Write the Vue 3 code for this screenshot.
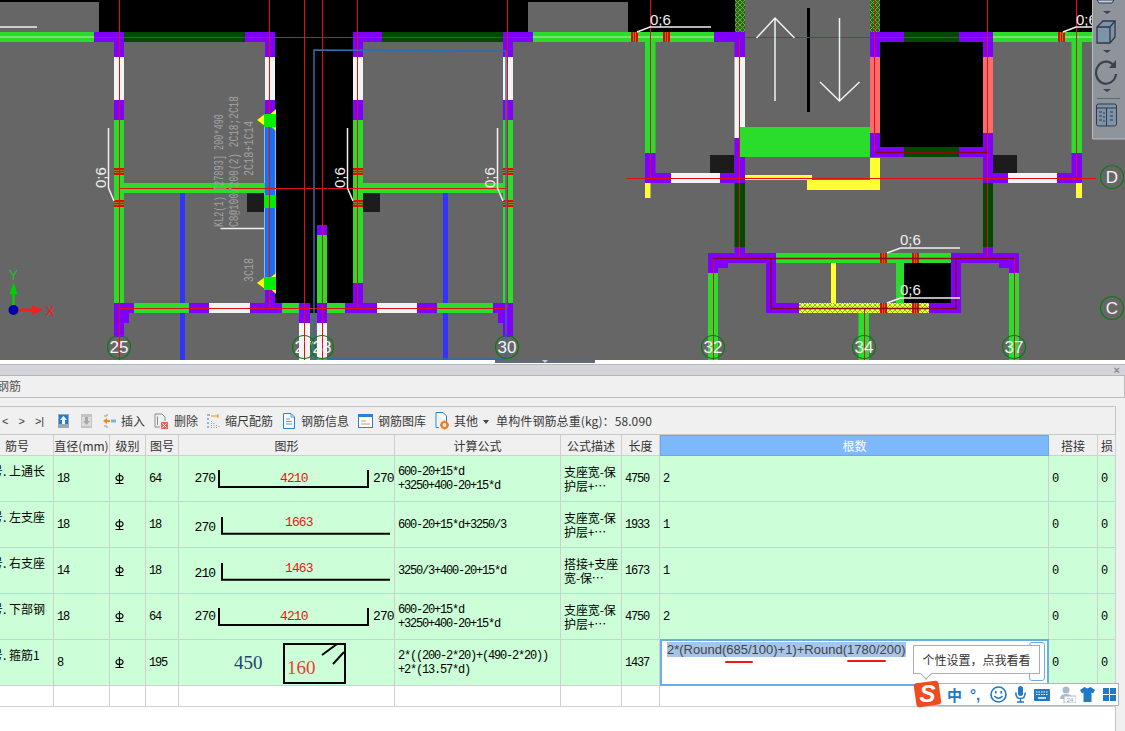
<template>
  <div class="page">
    <!-- CAD view, everything here sits on a free canvas -->
    <svg class="cad" width="1125" height="360" viewBox="0 0 1125 360">
      <defs>
        <pattern id="hatchGreen" width="5" height="5" patternUnits="userSpaceOnUse">
          <rect width="5" height="5" fill="#3c5a1e" />
          <path d="M0 0L5 5M5 0L0 5" stroke="#3fc52f" stroke-width="1" />
        </pattern>
        <pattern id="hatchYellow" width="5" height="5" patternUnits="userSpaceOnUse">
          <rect width="5" height="5" fill="#ffff33" />
          <path d="M0 0L5 5M5 0L0 5" stroke="#3fc52f" stroke-width="0.8" />
        </pattern>
      </defs>
      <rect width="1125" height="360" fill="#666666" />
      <rect v-for="(r, i) in walls" :key="'w' + i" :x="r[0]" :y="r[1]" :width="r[2]" :height="r[3]" :fill="r[4]" />
      <path v-for="(l, i) in redLines" :key="'l' + i" :d="l" class="red-line" />
      <path v-for="(l, i) in darkLines" :key="'d' + i" :d="l" class="dark-line" />

      <!-- selected column outline -->
      <path d="M506 51L314 50V359H506V51" class="selection" />

      <!-- lift arrows -->
      <path d="M775 18V101M756.5 38L775 18L794.5 38M839.5 18V101M820 82L839.5 101L859.5 82" class="white-thin" />

      <!-- beam text -->
      <text transform="rotate(-90 223 227)" x="223" y="227" class="beam-text" textLength="113" lengthAdjust="spacingAndGlyphs">KL2(1) [27893] 200*490</text>
      <text transform="rotate(-90 238 227)" x="238" y="227" class="beam-text" textLength="131" lengthAdjust="spacingAndGlyphs">C8@100/200(2) 2C18;2C18</text>
      <text transform="rotate(-90 253 176)" x="253" y="176" class="beam-text" textLength="55" lengthAdjust="spacingAndGlyphs">2C18+1C14</text>
      <text transform="rotate(-90 253 282)" x="253" y="282" class="beam-text" textLength="24" lengthAdjust="spacingAndGlyphs">3C18</text>
      <path d="M220.5 228.5H264" class="white-line" />
      <path d="M0 27H37" class="white-line" />

      <!-- triangles on the selected beam -->
      <path d="M276 109V131L264 120Z" class="tri" />
      <path d="M257 120L265 114V126Z" class="tri" />
      <path d="M276 273V294L264 283Z" class="tri" />
      <path d="M257 283L265 277V289Z" class="tri" />
      <rect x="264" y="114" width="12" height="13" fill="#00ee00" />
      <rect x="264" y="277" width="12" height="13" fill="#00ee00" />

      <!-- 0;6 labels -->
      <path v-for="(l, i) in leaders" :key="'p' + i" :d="l" class="white-line" />
      <text v-for="(t, i) in sideLabels" :key="'s' + i" :x="t" y="188" :transform="`rotate(-90 ${t} 188)`" class="small-label">0;6</text>
      <text v-for="(t, i) in topLabels" :key="'t' + i" :x="t[0]" :y="t[1]" class="small-label">0;6</text>

      <!-- axis bubbles -->
      <g v-for="a in axes" :key="a.t">
        <circle :cx="a.x" :cy="a.y" r="11.5" class="axis" />
        <text :x="a.x" :y="a.y + 6" class="axis-text">{{ a.t }}</text>
      </g>

      <!-- axis gizmo -->
      <path d="M13.5 310V292" stroke="#00d000" stroke-width="2.5" />
      <path d="M9.5 294L13.5 282L17.5 294Z" fill="#00d000" />
      <path d="M14 310H33" stroke="#f02020" stroke-width="3" />
      <path d="M32 305L43 310L32 315Z" fill="#f02020" />
      <circle cx="13.5" cy="310" r="5" fill="#0000a8" />
      <text x="13.5" y="280" class="gizmo gizmo-y">Y</text>
      <text x="50" y="316" class="gizmo gizmo-x">X</text>

      <!-- view toolbar on the right -->
      <rect x="1092" y="0" width="33" height="139" fill="#8e949a" />
      <path d="M1092.5 0V139H1125" fill="none" stroke="#b9bdc1" />
      <path d="M1097 0H1114L1112 3H1099Z" fill="#c3d2e3" stroke="#2e3a4a" />
      <g class="side-caret">
        <path d="M1103 11H1111L1107 14Z" />
        <path d="M1103 50H1111L1107 53Z" />
        <path d="M1103 89H1111L1107 92Z" />
      </g>
      <path d="M1097 27L1103 21H1115V37L1110 43H1097Z" fill="#7f93a8" stroke="#2e3a4a" stroke-width="1.3" />
      <path d="M1097 27H1110V43M1110 27L1115 21" fill="none" stroke="#2e3a4a" stroke-width="1.3" />
      <path d="M1114 66A10 11 0 1 0 1116 74" fill="none" stroke="#38434f" stroke-width="2.2" />
      <path d="M1116 60V68H1109Z" fill="#38434f" />
      <path d="M1097 98.500H1120" stroke="#5e666e" />
      <rect x="1096.500" y="104" width="20" height="22" rx="2" fill="#7f93a8" stroke="#2e3a4a" />
      <path d="M1097 108H1116M1106.500 108V126M1099 112H1102M1099 116H1102M1099 120H1102M1110 112H1113M1110 116H1113M1110 120H1113M1103 113H1105M1103 117H1105M1103 121H1105" stroke="#2e3a4a" fill="none" />
    </svg>

    <div class="strip"><div class="thumb"><i></i></div></div>
    <div class="band"><span class="close">×</span></div>
    <div class="title"><span>钢筋</span></div>
    <div class="spacer"></div>

    <div class="lower">
      <div class="panel">
        <div class="toolbar">
          <div class="nav"><span>&lt;</span><span>&gt;</span><span>&gt;|</span></div>
          <div class="updown">
            <svg width="11" height="14" viewBox="0 0 11 14">
              <rect width="11" height="14" fill="#9aa7b4" />
              <rect x="1" y="1" width="9" height="9" fill="#1b7ed2" />
              <path d="M5.500 2L9 6H7V10H4V6H2Z" fill="#fff" />
            </svg>
            <svg width="11" height="14" viewBox="0 0 11 14">
              <rect width="11" height="14" fill="#c4c4c4" />
              <rect x="1" y="3" width="9" height="9" fill="#dcdcdc" />
              <path d="M5.500 11L9 7H7V3H4V7H2Z" fill="#a8a8a8" />
            </svg>
          </div>
          <div class="tool">
            <svg width="13" height="16" viewBox="0 0 13 16">
              <path d="M1 3H4M1 13H4M4 1V3M4 13V15" stroke="#9a9a9a" fill="none" />
              <path d="M0 8L4 5V7H7V9H4V11Z" fill="#ef8a1d" />
              <rect x="8" y="6.500" width="5" height="3" fill="#7db2e0" />
            </svg>
            插入
          </div>
          <div class="tool">
            <svg width="15" height="16" viewBox="0 0 15 16">
              <path d="M1 1H8L11 4V8M6 14H1V1M3.500 3.500V12" stroke="#8c8c8c" fill="none" />
              <rect x="7" y="9" width="7" height="7" fill="#e8635c" />
              <path d="M8.500 10.500L12.500 14.500M12.500 10.500L8.500 14.500" stroke="#fff" />
            </svg>
            删除
          </div>
          <div class="tool">
            <svg width="13" height="16" viewBox="0 0 13 16">
              <path d="M0 2H3M0 6H2M0 10H2M0 14H2" stroke="#1b7ed2" />
              <path d="M4 3H11" stroke="#ef8a1d" />
              <path d="M11 1V5" stroke="#ef8a1d" />
              <path d="M4.500 8V15M7 10V15M9.500 12V15M12 13V15" stroke="#9a9a9a" stroke-dasharray="1 1" />
            </svg>
            缩尺配筋
          </div>
          <div class="tool">
            <svg width="14" height="16" viewBox="0 0 14 16">
              <path d="M1.500 .5H9L12.500 4V15.500H1.500Z" fill="#fff" stroke="#2a82d8" />
              <path d="M4 6H8M4 8.500H10M4 11H10M9 1V4H12" stroke="#5a9ad8" fill="none" />
            </svg>
            钢筋信息
          </div>
          <div class="tool">
            <svg width="15" height="16" viewBox="0 0 15 16">
              <rect x=".5" y="1.500" width="14" height="13" fill="#fff" stroke="#2a82d8" />
              <rect x="0" y="1" width="15" height="3" fill="#2a82d8" />
              <path d="M3 8H8M3 11H12" stroke="#c79a62" />
            </svg>
            钢筋图库
          </div>
          <div class="tool">
            <svg width="14" height="18" viewBox="0 0 14 18">
              <path d="M1 .5H8L11.500 4V10M4 15.500H1V.5" fill="#fff" stroke="#2a82d8" />
              <circle cx="9.500" cy="13" r="3" fill="none" stroke="#ef7d1d" stroke-width="2.200" />
              <path d="M9.500 8.500V10M9.500 16V17.500M5 13H6.500M12.500 13H14" stroke="#ef7d1d" stroke-width="1.600" />
            </svg>
            其他
          </div>
          <span class="caret"></span>
          <span class="total">单构件钢筋总重(kg)：58.090</span>
        </div>

        <table class="grid">
          <colgroup>
            <col v-for="w in colWidths" :key="w.k" :width="w.w" />
          </colgroup>
          <thead>
            <tr>
              <th class="first-head">筋号</th>
              <th>直径(mm)</th>
              <th>级别</th>
              <th>图号</th>
              <th>图形</th>
              <th>计算公式</th>
              <th>公式描述</th>
              <th>长度</th>
              <th class="active">根数</th>
              <th>搭接</th>
              <th class="cut">损</th>
            </tr>
          </thead>
          <tbody>
            <tr v-for="(r, i) in rows" :key="i">
              <td class="name"><span>{{ r.name }}</span></td>
              <td class="num">{{ r.dia }}</td>
              <td class="grade">
                <svg width="9" height="11" viewBox="0 0 9 11">
                  <ellipse cx="4.500" cy="5" rx="3.500" ry="2.500" fill="none" stroke="#000" stroke-width="1.200" />
                  <path d="M4.500 0V10M.5 10.500H8.500" stroke="#000" stroke-width="1.200" fill="none" />
                </svg>
              </td>
              <td class="num">{{ r.no }}</td>
              <td class="shape-cell">
                <svg class="shape" width="215" height="45" viewBox="0 0 215 45">
                  <path :d="r.shape" class="bar" />
                  <text v-for="t in r.labels" :key="t.s + t.x" :x="t.x" :y="t.y" :class="t.c">{{ t.s }}</text>
                </svg>
              </td>
              <td class="num formula"><div v-for="f in r.formula" :key="f">{{ f }}</div></td>
              <td class="desc">{{ r.desc }}</td>
              <td class="num">{{ r.len }}</td>
              <td v-if="!r.editing" class="num">{{ r.count }}</td>
              <td v-else class="edit-cell">
                <div class="editor">
                  <span class="selected">2*(Round(685/100)+1)+Round(1780/200)</span>
                  <i class="mark mark-a"></i>
                  <i class="mark mark-b"></i>
                  <i class="editor-btn"></i>
                </div>
              </td>
              <td class="num">0</td>
              <td class="num">0</td>
            </tr>
            <tr class="empty">
              <td v-for="w in colWidths" :key="w.k"></td>
            </tr>
          </tbody>
        </table>
      </div>
      <div class="side"></div>
    </div>

    <!-- input method hint and bar over the table -->
    <div class="hint">个性设置，点我看看<i></i></div>
    <div class="ime">
      <svg class="ime-logo" width="29" height="28" viewBox="0 0 29 28">
        <rect x="2" y="2" width="25" height="24" rx="3" fill="#ee4e1f" transform="rotate(-8 14 14)" />
        <text x="14.500" y="22" class="logo-s">S</text>
      </svg>
      <span class="ime-cn">中</span>
      <span class="ime-punct">°,</span>
      <svg width="17" height="17" viewBox="0 0 17 17">
        <circle cx="8.500" cy="8.500" r="7.500" fill="none" stroke="#1f78c8" stroke-width="1.600" />
        <path d="M5.800 5V7.500M11.200 5V7.500" stroke="#1f78c8" stroke-width="1.600" />
        <path d="M4.500 10Q8.500 14.500 12.500 10" fill="none" stroke="#1f78c8" stroke-width="1.500" />
      </svg>
      <svg width="11" height="17" viewBox="0 0 11 17">
        <rect x="3" y="0" width="5" height="10" rx="2.500" fill="#1f78c8" />
        <path d="M.8 6.500Q.8 12.500 5.500 12.500Q10.200 12.500 10.200 6.500M5.500 12.500V15.500M2 16H9" fill="none" stroke="#1f78c8" stroke-width="1.500" />
      </svg>
      <svg width="16" height="12" viewBox="0 0 16 12">
        <rect width="16" height="12" rx="1" fill="#1f78c8" />
        <path d="M2 3H14M2 5.500H14" stroke="#fff" stroke-dasharray="1.500 1" />
        <path d="M4 9H12" stroke="#fff" stroke-width="1.500" />
      </svg>
      <svg class="ime-person" width="18" height="17" viewBox="0 0 18 17">
        <circle cx="8" cy="4" r="3.500" fill="#a9bccb" />
        <path d="M2 13Q2 8 8 8Q14 8 14 13Z" fill="#a9bccb" />
        <rect x="6" y="10" width="12" height="7" fill="#fff" stroke="#a9bccb" />
        <text x="12" y="16" class="ime-small">24</text>
      </svg>
      <svg width="15" height="15" viewBox="0 0 15 15">
        <path d="M4.500 0L7.500 1.500L10.500 0L15 3L13 6.500L11.500 5.500V15H3.500V5.500L2 6.500L0 3Z" fill="#1f78c8" />
      </svg>
      <svg width="13" height="13" viewBox="0 0 13 13">
        <rect width="6" height="6" fill="#1f78c8" />
        <rect x="7" width="6" height="6" fill="#1f78c8" />
        <rect y="7" width="6" height="6" fill="#1f78c8" />
        <rect x="7" y="7" width="6" height="6" fill="#1f78c8" />
      </svg>
    </div>
  </div>
</template>

<script setup>
const G = "#2bdd2b";
const P = "#8000ff";
const D = "#004b00";
const W = "#f4f4f4";
const K = "#000000";
const Y = "#ffff33";
const B = "#3333ff";
const S = "#1c1c1c";
const N = "#ff6a6a";
const R = "#f00000";
const T = "#6aa820";

const tieV = (x, y) => [
  [x, y, 10, 7, R],
  [x, y + 2, 10, 0.8, T],
  [x, y + 4.2, 10, 0.8, T],
];
const tieH = (x, y) => [
  [x, y, 7, 10, R],
  [x + 2, y, 0.8, 10, T],
  [x + 4.2, y, 0.8, 10, T],
];

const walls = [
  // black voids at the top
  [0, 0, 100, 2, K],
  [99, 0, 429, 32, K],
  [528, 0, 100, 2, K],
  [628, 0, 107, 32, K],
  [880, 0, 245, 32, K],
  [275, 32, 78, 271, K],
  [310, 303, 7, 10, K],
  [735, 0, 10, 32, "url(#hatchGreen)"],
  [870, 0, 10, 32, "url(#hatchGreen)"],
  [880, 42, 103, 105, K],
  [904, 263, 47, 40, K],
  // top wall
  [0, 32, 94, 10, G],
  [0, 36.5, 94, 1, "#cfe8b0"],
  [94, 32, 30, 10, P],
  [124, 32, 121, 10, D],
  [245, 32, 30, 10, P],
  [353, 32, 29, 10, P],
  [382, 32, 121, 10, D],
  [503, 32, 30, 10, P],
  [533, 32, 181, 10, G],
  [533, 36.5, 181, 1, "#cfe8b0"],
  [714, 32, 31, 10, P],
  [870, 32, 34, 10, P],
  [904, 32, 55, 10, D],
  [959, 32, 34, 10, P],
  [993, 32, 99, 10, G],
  [993, 36.5, 99, 1, "#cfe8b0"],
  ...tieH(631, 32),
  ...tieH(663, 32),
  ...tieH(1058, 32),
  // column 25
  [114, 42, 10, 15, P],
  [114, 57, 10, 43, W],
  [114, 100, 10, 20, P],
  [114, 120, 10, 183, G],
  ...tieV(114, 168),
  ...tieV(114, 200),
  // column 27
  [265, 42, 10, 15, P],
  [265, 57, 10, 43, W],
  [265, 100, 10, 14, P],
  [264, 126, 12, 152, "#8ab8e8"],
  [265, 126, 10, 152, "#1a70f0"],
  [265, 290, 10, 13, P],
  [264, 195, 12, 13, "#00ee00"],
  // column 28 and 30
  [353, 42, 10, 15, P],
  [353, 57, 10, 43, W],
  [353, 100, 10, 20, P],
  [353, 120, 10, 163, G],
  [353, 283, 10, 20, P],
  ...tieV(353, 168),
  ...tieV(353, 200),
  [503, 42, 10, 15, P],
  [503, 57, 10, 43, W],
  [503, 100, 10, 20, P],
  [503, 120, 10, 183, G],
  ...tieV(503, 168),
  ...tieV(503, 200),
  // short wall at 28
  [317, 225, 10, 10, P],
  [317, 235, 10, 68, G],
  // middle walls
  [124, 183, 141, 10, G],
  [363, 183, 140, 10, G],
  [247, 193, 17, 19, S],
  [363, 193, 17, 19, S],
  [180, 193, 5, 110, B],
  [180, 313, 5, 47, B],
  [443, 193, 5, 110, B],
  [443, 313, 5, 47, B],
  // bottom wall
  [114, 303, 20, 10, P],
  [134, 303, 55, 10, G],
  [189, 303, 20, 10, P],
  [209, 303, 41, 10, W],
  [250, 303, 32, 10, P],
  [282, 303, 17, 10, G],
  [299, 303, 11, 10, P],
  [317, 303, 10, 10, P],
  [327, 303, 18, 10, G],
  [345, 303, 32, 10, P],
  [377, 303, 40, 10, W],
  [417, 303, 20, 10, P],
  [437, 303, 56, 10, G],
  [493, 303, 20, 10, P],
  [114, 313, 15, 10, P],
  [114, 323, 10, 14, P],
  [498, 313, 15, 10, P],
  [503, 323, 10, 14, P],
  [299, 313, 11, 10, P],
  [299, 323, 11, 37, W],
  [317, 313, 10, 10, P],
  [317, 323, 10, 37, W],
  // stairs group
  [645, 42, 10.5, 111, G],
  [645, 153, 10.5, 30, P],
  [645, 173, 26, 10, P],
  [671, 173, 49, 10, W],
  [720, 173, 25, 10, P],
  [645, 183, 5.5, 15, Y],
  [710, 155, 24.5, 18, S],
  [734.500, 42, 10.5, 15, P],
  [734.500, 57, 10.5, 81, W],
  [734.500, 138, 10.5, 45, P],
  [734.500, 183, 10.5, 64, D],
  [734.500, 247, 10.5, 6, P],
  [740, 127, 130, 30, G],
  [807, 8, 3, 104, K],
  [870, 42, 10, 15, P],
  [870, 57, 10, 76, N],
  [870, 133, 10, 24, P],
  [983, 42, 10, 15, P],
  [983, 57, 10, 76, N],
  [983, 133, 10, 50, P],
  [880, 147, 24, 10, P],
  [904, 147, 55, 10, D],
  [959, 147, 24, 10, P],
  [983, 173, 25, 10, P],
  [1008, 173, 49, 10, W],
  [1057, 173, 25, 10, P],
  [1071.500, 42, 10.5, 111, G],
  [1071.500, 153, 10.5, 30, P],
  [1076, 183, 6, 15, Y],
  [993, 155, 24, 18, S],
  [983, 183, 10, 64, D],
  [983, 247, 10, 6, P],
  [745, 175, 67, 5, Y],
  [807, 180, 73, 10, Y],
  [870, 158, 10, 32, Y],
  // lower box
  [708, 253, 68, 10, P],
  [776, 253, 175, 10, G],
  [951, 253, 68, 10, P],
  ...tieH(880, 253),
  ...tieH(912, 253),
  [708, 263, 10, 10, P],
  [708, 263, 20, 5, P],
  [708, 273, 10, 87, G],
  [1009, 263, 10, 10, P],
  [999, 263, 20, 5, P],
  [1009, 273, 10, 87, G],
  [766, 263, 10, 50, P],
  [951, 263, 10, 50, P],
  [766, 303, 33, 10, P],
  [799, 303, 130, 10, "url(#hatchYellow)"],
  [929, 303, 32, 10, P],
  [896, 263, 8, 40, G],
  [831, 263, 5, 40, Y],
  ...tieH(880, 303),
  ...tieH(912, 303),
  [858.500, 313, 10.5, 47, G],
];

const redLines = [
  "M94 37.500H533",
  "M745 37.500H993",
  "M119.500 0V360",
  "M269.500 0V308",
  "M304.500 0V360",
  "M322.500 0V360",
  "M357.500 0V308",
  "M507.500 0V308",
  "M650.500 0V178",
  "M739.500 37V258",
  "M874.500 0V152",
  "M987.500 0V258",
  "M1076.500 0V177",
  "M119 188.500H507",
  "M627 178.500H1096",
  "M119 308.500H507",
  "M713.500 258V360",
  "M1014.500 258V360",
  "M864.500 308V360",
];

const darkLines = [
  "M875 152.500H987.500",
  "M713 258.500H1014.500",
  "M771 258.500V308.500H956V258.500",
];

const leaders = [
  "M108.500 128V188L114 201",
  "M347.500 128V188L353 201",
  "M497.500 128V188L503 201",
  "M637 32L650 27H711",
  "M1063 32L1076 27H1092",
  "M887 253L900.500 248H960",
  "M887 303L900.500 298H960",
];
const sideLabels = [106, 345, 495];
const topLabels = [
  [650, 25],
  [1076, 25],
  [900, 245],
  [900, 295],
];

const axes = [
  { t: "25", x: 119, y: 347 },
  { t: "27", x: 304, y: 347 },
  { t: "28", x: 322, y: 347 },
  { t: "30", x: 507, y: 347 },
  { t: "32", x: 713, y: 347 },
  { t: "34", x: 864, y: 347 },
  { t: "37", x: 1014, y: 347 },
  { t: "D", x: 1112, y: 177 },
  { t: "C", x: 1112, y: 308 },
];

const colWidths = [54, 56, 36, 33, 216, 166, 61, 38, 389, 49, 18].map((w, k) => ({ w, k }));

const longShape = "M40 14V31H189V14";
const leftShape = "M43 15V31.700H211";
const longLabels = (y) => [
  { s: "270", x: 15.500, y, c: "dim" },
  { s: "4210", x: 101, y, c: "dim red" },
  { s: "270", x: 194, y, c: "dim" },
];

const rows = [
  {
    name: "号. 上通长", dia: "18", no: "64", shape: longShape, labels: longLabels(26),
    formula: ["600-20+15*d", "+3250+400-20+15*d"], desc: "支座宽-保护层+…", len: "4750", count: "2",
  },
  {
    name: "号. 左支座", dia: "18", no: "18", shape: leftShape,
    labels: [{ s: "270", x: 15.500, y: 29, c: "dim" }, { s: "1663", x: 106, y: 24, c: "dim red" }],
    formula: ["600-20+15*d+3250/3"], desc: "支座宽-保护层+…", len: "1933", count: "1",
  },
  {
    name: "号. 右支座", dia: "14", no: "18", shape: leftShape,
    labels: [{ s: "210", x: 15.500, y: 29, c: "dim" }, { s: "1463", x: 106, y: 24, c: "dim red" }],
    formula: ["3250/3+400-20+15*d"], desc: "搭接+支座宽-保…", len: "1673", count: "1",
  },
  {
    name: "号. 下部钢", dia: "18", no: "64", shape: longShape, labels: longLabels(26),
    formula: ["600-20+15*d", "+3250+400-20+15*d"], desc: "支座宽-保护层+…", len: "4750", count: "2",
  },
  {
    name: "号. 箍筋1", dia: "8", no: "195",
    shape: "M105 4H166V43H105ZM143 15L158 4M154 24L165 12",
    labels: [{ s: "450", x: 55, y: 29, c: "serif navy" }, { s: "160", x: 108, y: 34, c: "serif soft-red" }],
    formula: ["2*((200-2*20)+(490-2*20))", "+2*(13.57*d)"], desc: "", len: "1437", editing: true,
  },
];
</script>

<style>
body {
  background: #fff;
  overflow: hidden;
}
</style>

<style scoped>
.page {
  position: relative;
  width: 1125px;
  height: 731px;
  overflow: hidden;
  background: #fff;
  font-family: "Noto Sans CJK SC", "Liberation Sans", sans-serif;
  font-size: 12px;
  color: #333;
}

.cad {
  display: block;
}
.red-line {
  stroke: #e01010;
  stroke-width: 1;
  fill: none;
}
.dark-line {
  stroke: #8a0a10;
  stroke-width: 1.5;
  fill: none;
}
.selection {
  fill: none;
  stroke: #2f6ea6;
  stroke-width: 1.5;
}
.white-thin {
  fill: none;
  stroke: #f2f2f2;
  stroke-width: 1.5;
}
.white-line {
  fill: none;
  stroke: #f0f0f0;
  stroke-width: 1.5;
}
.beam-text {
  font-family: "Liberation Mono", monospace;
  font-size: 13px;
  fill: #a3a3a3;
}
.tri {
  fill: #ffff00;
}
.small-label {
  font-family: "Liberation Sans", sans-serif;
  font-size: 15px;
  fill: #f0f0f0;
}
.axis {
  fill: none;
  stroke: #0a7a12;
  stroke-width: 1.2;
}
.axis-text {
  font-family: "Liberation Sans", sans-serif;
  font-size: 17px;
  fill: #f4f4f4;
  text-anchor: middle;
}
.gizmo {
  font-family: "Liberation Sans", sans-serif;
  font-size: 14px;
  text-anchor: middle;
}
.gizmo-y {
  fill: #20c020;
}
.gizmo-x {
  fill: #f02020;
}
.side-caret {
  fill: #3a4450;
}

.strip {
  display: flex;
  height: 4px;
  background: #fff;
  border-bottom: 1px solid #b8b8b8;
}
.thumb {
  display: flex;
  justify-content: center;
  width: 100px;
  height: 3px;
  margin-left: 495px;
  background: #5f6b78;
}
.thumb i {
  width: 0;
  height: 0;
  border: 3px solid transparent;
  border-top-color: #c8ccd0;
}
.band {
  display: flex;
  justify-content: flex-end;
  align-items: center;
  height: 10px;
  padding-right: 5px;
  background: #d3d5da;
  border-bottom: 1px solid #b5b5b5;
}
.close {
  font-family: "Liberation Sans", sans-serif;
  font-size: 11px;
  font-weight: bold;
  line-height: 10px;
  color: #888;
}
.title {
  height: 21px;
  line-height: 20px;
  overflow: hidden;
  background: #f0f0f0;
  border-bottom: 1px solid #bcbcbc;
  border-right: 1px solid #bcbcbc;
  color: #555;
}
.title span {
  margin-left: -3px;
  display: inline-block;
}
.spacer {
  height: 8px;
  background: #f0f0f0;
}
.lower {
  display: flex;
  height: 325px;
}
.panel {
  box-sizing: border-box;
  width: 1116px;
  height: 325px;
  background: #fff;
  border-top: 1px solid #c4c4c4;
  border-right: 1px solid #c4c4c4;
}
.side {
  flex: 1;
  background: #f0f0f0;
}
.toolbar {
  display: flex;
  align-items: center;
  gap: 9px;
  height: 27px;
  background: #f0f0f0;
  border-bottom: 1px solid #c8c8c8;
  color: #3a3a3a;
}
.nav {
  display: flex;
  width: 45px;
  margin-right: 2px;
  padding-left: 2px;
  gap: 10px;
  font-family: "Liberation Sans", sans-serif;
  font-size: 11px;
}
.updown {
  display: flex;
  gap: 12px;
  margin-right: 2px;
}
.tool {
  display: flex;
  align-items: center;
  gap: 5px;
  white-space: nowrap;
}
.caret {
  width: 0;
  height: 0;
  margin: 2px -1px 0 -4px;
  border: 3px solid transparent;
  border-top: 4px solid #444;
  border-bottom: 0;
}
.total {
  margin-left: -1px;
  white-space: nowrap;
  letter-spacing: 0.1px;
}

.grid {
  table-layout: fixed;
  width: 1116px;
  border-collapse: separate;
  border-spacing: 0;
}
.grid th,
.grid td {
  box-sizing: border-box;
  padding: 0;
  border-right: 1px solid #d0d0d0;
  border-bottom: 1px solid #d0d0d0;
  overflow: hidden;
}
.grid th {
  height: 21px;
  font-weight: normal;
  background: #f0f0f0;
  color: #333;
  white-space: nowrap;
}
.first-head {
  text-align: left;
  padding-left: 5px !important;
}
.grid th.active {
  background: #7db8fb;
  color: #fff;
  border: 1px solid #68a9ef;
}
.grid th.cut {
  text-align: left;
  padding-left: 3px !important;
}
.grid tbody tr {
  height: 46px;
}
.grid tbody td {
  height: 46px;
  background: #ccffd7;
  color: #000;
}
.grid tbody tr.empty,
.grid tbody tr.empty td {
  height: 21px;
  background: #fff;
}
.name {
  vertical-align: top;
  white-space: nowrap;
  font-size: 12px;
  line-height: 14px;
  padding-top: 8px !important;
}
.name span {
  display: inline-block;
  margin-left: -9px;
}
.num {
  font-family: "Liberation Mono", monospace;
  font-size: 12px;
  letter-spacing: -1.2px;
  padding-left: 3px !important;
  line-height: 14px;
}
.formula {
  white-space: nowrap;
}
.grade {
  padding-left: 5px !important;
}
.grade svg {
  display: block;
}
.shape-cell svg {
  display: block;
}
.bar {
  fill: none;
  stroke: #000;
  stroke-width: 2;
}
.dim {
  font-family: "Liberation Mono", monospace;
  font-size: 13px;
  letter-spacing: -0.9px;
  fill: #000;
}
.serif {
  font-family: "Liberation Serif", serif;
  font-size: 19px;
}
.navy {
  fill: #24406e;
}
.dim.red {
  fill: #f01010;
}
.soft-red {
  fill: #f23a3a;
}
.desc {
  padding-left: 3px !important;
  padding-right: 2px !important;
  line-height: 14px;
  word-break: break-all;
  letter-spacing: -0.1px;
}
.edit-cell {
  position: relative;
  overflow: visible !important;
}
.editor {
  position: absolute;
  inset: -1px -1px -1px 0;
  box-sizing: border-box;
  padding: 2px 0 0 5px;
  background: #fff;
  border: 2px solid #6aaee8;
  font-family: "Liberation Sans", sans-serif;
  font-size: 13px;
  line-height: 14px;
  color: #444;
}
.selected {
  background: #a7c5e8;
  white-space: nowrap;
}
.mark {
  position: absolute;
  height: 2px;
  background: #f01810;
  border-radius: 1px;
}
.mark-a {
  left: 63px;
  top: 20px;
  width: 28px;
}
.mark-b {
  left: 185px;
  top: 19px;
  width: 39px;
}
.editor-btn {
  position: absolute;
  right: 2px;
  top: 1px;
  bottom: 3px;
  width: 14px;
  border: 1px solid #6aaee8;
  border-radius: 3px;
  background: #fff;
}

.hint {
  position: absolute;
  left: 913px;
  top: 645px;
  width: 127px;
  height: 29px;
  box-sizing: border-box;
  line-height: 27px;
  text-align: center;
  font-size: 12px;
  background: #fff;
  border: 1px solid #aeaeae;
  color: #333;
}
.hint i {
  position: absolute;
  left: 8px;
  top: 24px;
  width: 7px;
  height: 7px;
  background: #fff;
  border-right: 1px solid #aeaeae;
  border-bottom: 1px solid #aeaeae;
  transform: rotate(45deg);
}
.ime {
  position: absolute;
  left: 925px;
  top: 683px;
  width: 194px;
  height: 23px;
  box-sizing: border-box;
  display: flex;
  align-items: center;
  gap: 8px;
  padding-left: 21px;
  background: #fff;
  border: 1px solid #aeb4ba;
}
.ime-logo {
  position: absolute;
  left: -13px;
  top: -4px;
}
.logo-s {
  font-family: "Liberation Sans", sans-serif;
  font-weight: bold;
  font-style: italic;
  font-size: 24px;
  fill: #fff;
  text-anchor: middle;
}
.ime-cn {
  font-size: 15px;
  font-weight: bold;
  color: #1f78c8;
  line-height: 20px;
}
.ime-punct {
  width: 12px;
  font-family: "Liberation Sans", sans-serif;
  font-size: 15px;
  font-weight: bold;
  color: #1f78c8;
  line-height: 20px;
}
.ime-person {
  margin-right: -4px;
}
.ime-small {
  font-family: "Liberation Sans", sans-serif;
  font-size: 6px;
  fill: #8aa0b0;
  text-anchor: middle;
}
</style>
